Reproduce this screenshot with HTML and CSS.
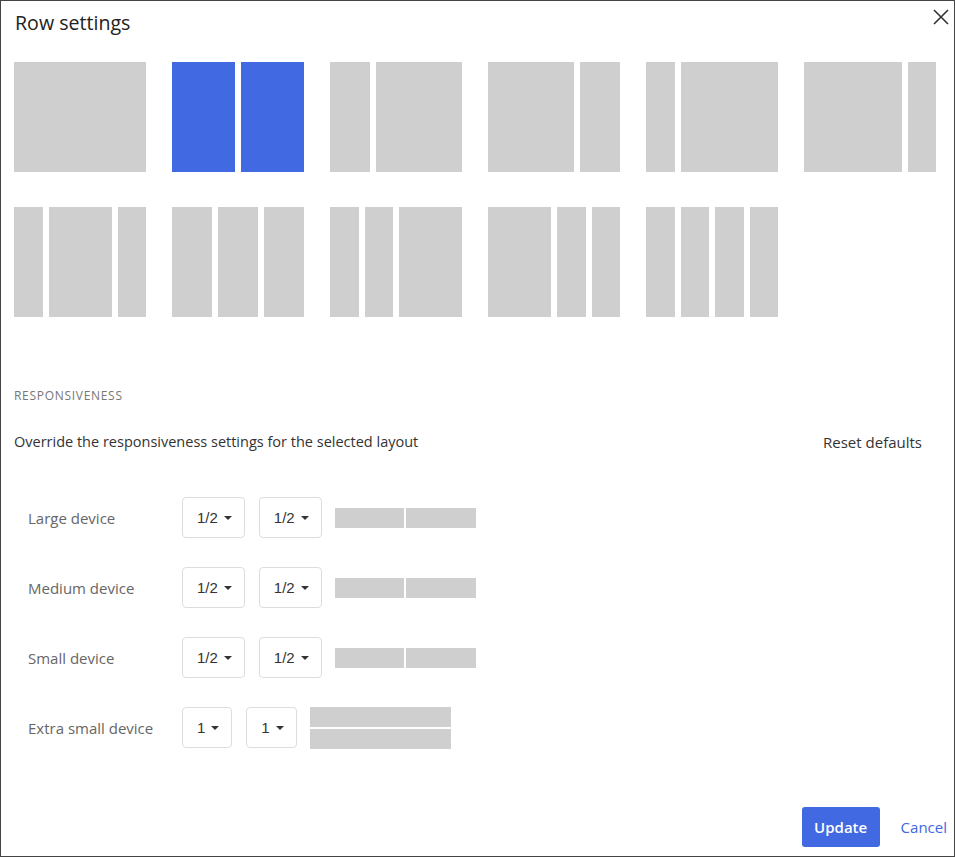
FILE: index.html
```html
<!DOCTYPE html>
<html lang="en">
<head>
  <meta charset="UTF-8">
  <meta name="viewport" content="width=device-width, initial-scale=1.0">
  <title>Row settings</title>
  <link rel="stylesheet" href="styles.css">
</head>
<body>

  <div class="dialog">

    <!-- Header -->
    <div class="dialog-header">
      <h1 class="dialog-title">Row settings</h1>
      <button class="close-btn" aria-label="Close">
        <svg width="16" height="16" viewBox="0 0 16 16">
          <path d="M1 1 L15 15 M15 1 L1 15" stroke="#333" stroke-width="1.6" fill="none"/>
        </svg>
      </button>
    </div>

    <!-- Layout presets -->
    <div class="layouts">
      <div class="layout"><span class="col c12"></span></div>
      <div class="layout selected"><span class="col c6"></span><span class="col c6"></span></div>
      <div class="layout"><span class="col c4"></span><span class="col c8"></span></div>
      <div class="layout"><span class="col c8"></span><span class="col c4"></span></div>
      <div class="layout"><span class="col c3"></span><span class="col c9"></span></div>
      <div class="layout"><span class="col c9"></span><span class="col c3"></span></div>
      <div class="layout"><span class="col c3"></span><span class="col c6"></span><span class="col c3"></span></div>
      <div class="layout"><span class="col c4"></span><span class="col c4"></span><span class="col c4"></span></div>
      <div class="layout"><span class="col c3"></span><span class="col c3"></span><span class="col c6"></span></div>
      <div class="layout"><span class="col c6"></span><span class="col c3"></span><span class="col c3"></span></div>
      <div class="layout"><span class="col c3"></span><span class="col c3"></span><span class="col c3"></span><span class="col c3"></span></div>
    </div>

    <!-- Responsiveness -->
    <div class="section-label">Responsiveness</div>
    <div class="section-head">
      <p>Override the responsiveness settings for the selected layout</p>
      <button class="reset-btn">Reset defaults</button>
    </div>

    <div class="devices">
      <div class="device-row">
        <span class="device-name">Large device</span>
        <button class="size-select">1/2<i class="caret"></i></button>
        <button class="size-select">1/2<i class="caret"></i></button>
        <div class="preview"><span></span><span></span></div>
      </div>
      <div class="device-row">
        <span class="device-name">Medium device</span>
        <button class="size-select">1/2<i class="caret"></i></button>
        <button class="size-select">1/2<i class="caret"></i></button>
        <div class="preview"><span></span><span></span></div>
      </div>
      <div class="device-row">
        <span class="device-name">Small device</span>
        <button class="size-select">1/2<i class="caret"></i></button>
        <button class="size-select">1/2<i class="caret"></i></button>
        <div class="preview"><span></span><span></span></div>
      </div>
      <div class="device-row">
        <span class="device-name">Extra small device</span>
        <button class="size-select">1<i class="caret"></i></button>
        <button class="size-select">1<i class="caret"></i></button>
        <div class="preview stacked"><span></span><span></span></div>
      </div>
    </div>

    <!-- Footer -->
    <div class="dialog-footer">
      <button class="update-btn">Update</button>
      <button class="cancel-btn">Cancel</button>
    </div>

  </div>

</body>
</html>
```

FILE: styles.css
```css
body {
  margin: 0;
  font-family: 'Open Sans', 'Noto Sans', sans-serif;
  background-color: #fff;
  color: #333;
}

button {
  font-family: inherit;
  background: none;
  border: none;
  padding: 0;
  cursor: pointer;
}

.dialog {
  box-sizing: border-box;
  width: 955px;
  height: 857px;
  border: 1px solid #444;
  display: flex;
  flex-direction: column;
}

/* Header */
.dialog-header {
  display: flex;
  justify-content: space-between;
  align-items: center;
  padding: 10px 4px 0 14px;
}

.dialog-title {
  margin: 0;
  font-size: 19.6px;
  font-weight: 400;
  line-height: 24px;
  color: #222;
}

.close-btn {
  width: 18px;
  height: 18px;
  display: flex;
  align-items: center;
  justify-content: center;
  margin-top: -12px;
}

/* Layout presets */
.layouts {
  display: flex;
  flex-wrap: wrap;
  column-gap: 26px;
  row-gap: 35px;
  padding: 0 13px;
  margin-top: 27px;
}

.layout {
  width: 132px;
  height: 110px;
  display: flex;
  gap: 6px;
  cursor: pointer;
}

.col {
  display: block;
  height: 100%;
  background-color: #cfcfcf;
}

.layout.selected .col {
  background-color: #4169e1;
}

/* 12-grid widths, 6px gutter */
.c3  { width: calc(138px * 3 / 12 - 6px); }
.c4  { width: calc(138px * 4 / 12 - 6px); }
.c6  { width: calc(138px * 6 / 12 - 6px); }
.c8  { width: calc(138px * 8 / 12 - 6px); }
.c9  { width: calc(138px * 9 / 12 - 6px); }
.c12 { width: 132px; }

/* Responsiveness */
.section-label {
  margin: 71px 0 0 13px;
  font-size: 12px;
  line-height: 16px;
  letter-spacing: 0.7px;
  text-transform: uppercase;
  color: #777;
}

.section-head {
  display: flex;
  justify-content: space-between;
  align-items: center;
  padding: 0 32px 0 13px;
  margin-top: 28px;
}

.section-head p {
  margin: 0;
  font-size: 14.5px;
  line-height: 20px;
  color: #333;
}

.reset-btn {
  font-size: 15px;
  line-height: 20px;
  color: #333;
}

.devices {
  display: flex;
  flex-direction: column;
  gap: 29px;
  margin-top: 45px;
  padding-left: 27px;
}

.device-row {
  display: flex;
  align-items: center;
  gap: 14px;
  height: 41px;
}

.device-name {
  width: 140px;
  font-size: 15px;
  color: #666;
}

.size-select {
  box-sizing: border-box;
  height: 41px;
  padding: 0 12px 0 14px;
  border: 1px solid #ddd;
  border-radius: 4px;
  display: flex;
  align-items: center;
  font-family: 'Liberation Sans', Arial, sans-serif;
  font-size: 15px;
  color: #333;
}

.caret {
  width: 0;
  height: 0;
  margin-left: 6px;
  border-top: 4.5px solid #333;
  border-left: 4px solid transparent;
  border-right: 4px solid transparent;
}

.preview {
  width: 141px;
  display: flex;
  gap: 2px;
  margin-left: -1px;
}

.preview span {
  flex: 1;
  height: 20px;
  background-color: #cfcfcf;
}

.preview.stacked {
  flex-direction: column;
}

.preview.stacked span {
  flex: none;
}

/* Footer */
.dialog-footer {
  margin-top: auto;
  display: flex;
  justify-content: flex-end;
  align-items: center;
  gap: 20px;
  padding: 0 6px 9px 0;
}

.update-btn {
  width: 78px;
  height: 40px;
  background-color: #4169e1;
  color: #fff;
  border-radius: 3px;
  font-size: 15px;
  font-weight: 600;
}

.cancel-btn {
  height: 40px;
  padding: 0 1px;
  color: #4169e1;
  font-size: 15px;
}
```
